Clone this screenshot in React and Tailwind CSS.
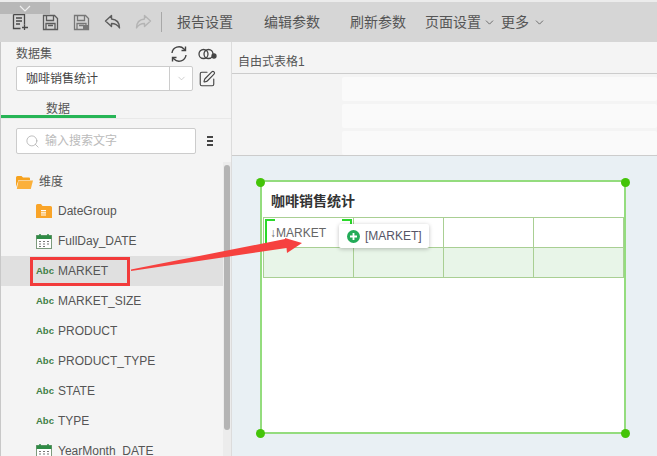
import React from "react";
import { ChevronDown, Search, SquarePen } from "lucide-react";

const FONT = "font-['Liberation_Sans','Noto_Sans_CJK_SC',sans-serif]";

const NewReportIcon = () => (
  <svg width="17" height="18" viewBox="0 0 17 18" fill="none" stroke="#4a4a4a" strokeWidth="1.300">
    <path d="M1.500 1.500h11v10M1.500 1.500v14h7" />
    <path d="M4 5h6M4 8h6M4 11h4" />
    <path d="M12.500 11.500v5.500M10 14.500h6" />
  </svg>
);

const SaveIcon = ({ dim }) => (
  <svg width="17" height="17" viewBox="0 0 17 17" fill="none" stroke={dim ? "#777" : "#5c5c5c"} strokeWidth="1.300">
    <path d="M1.500 1.500h11l3 3v11h-14z" />
    <path d="M4.500 1.500v5h7v-5M4 15.500v-6h9v6M6 11.500h5" />
    {dim && <path d="M10 11h6v5h-6z" fill="#777" stroke="none" />}
  </svg>
);

const UndoIcon = ({ color, flip }) => (
  <svg className={flip ? "-scale-x-100" : ""} width="17" height="16" viewBox="0 0 17 16" fill="none" stroke={color} strokeWidth="1.400" strokeLinejoin="round">
    <path d="M7.500 1.500L1.500 7l6 5.500V9.500c3.500 0 6 1 8 4.500 0-5-3-8.500-8-9z" />
  </svg>
);

const FolderOpenIcon = () => (
  <svg width="17" height="15" viewBox="0 0 17 15">
    <path d="M0 2.500Q0 1 1.500 1h4l1.500 1.500h6q1 0 1 1V5H2.500L0 12z" fill="#f6a21e" />
    <path d="M2.500 5.500H17l-2.200 8.500H.8z" fill="#fbb03b" />
  </svg>
);

const GroupIcon = () => (
  <svg width="16" height="14" viewBox="0 0 16 14">
    <path d="M0 1.500Q0 0 1.500 0h3.500l1.500 2H14.500q1.500 0 1.500 1.500V14H0z" fill="#f9a428" />
    <path d="M5 6h5v1.200H5zM5 8.200h5v1.200H5zM5 10.400h5v1.200H5z" fill="#fff" />
  </svg>
);

const CalendarIcon = () => (
  <svg width="16" height="15" viewBox="0 0 16 15">
    <rect x="0.500" y="1.500" width="15" height="13" fill="#fff" stroke="#7d9a7d" />
    <rect x="0.500" y="1.500" width="15" height="3.500" fill="#2e8b45" />
    <path d="M4 0v3M12 0v3" stroke="#2e8b45" strokeWidth="1.500" />
    <path d="M3 7.500h2M7 7.500h2M11 7.500h2M3 10h2M7 10h2M11 10h2M3 12.500h2M7 12.500h2" stroke="#777" />
  </svg>
);

const AbcIcon = () => (
  <span className="w-4 text-[9.5px] leading-none font-bold text-[#3f7f45] font-['Liberation_Sans',sans-serif]">Abc</span>
);

const fields = [
  ["group", "DateGroup"],
  ["date", "FullDay_DATE"],
  ["abc", "MARKET"],
  ["abc", "MARKET_SIZE"],
  ["abc", "PRODUCT"],
  ["abc", "PRODUCT_TYPE"],
  ["abc", "STATE"],
  ["abc", "TYPE"],
  ["date", "YearMonth_DATE"],
];

const Handle = ({ className }) => (
  <div className={`absolute w-[9px] h-[9px] rounded-full bg-[#44c408] ${className}`} />
);

const Toolbar = () => (
  <div className="h-10 flex items-center bg-[#d6d6d6] text-[14px] text-[#555] shrink-0">
    <div className="ml-3 flex items-center">
      <NewReportIcon />
      <div className="ml-[13px]"><SaveIcon /></div>
      <div className="ml-[14px]"><SaveIcon dim /></div>
      <div className="ml-[14px]"><UndoIcon color="#5c5c5c" /></div>
      <div className="ml-[14px]"><UndoIcon color="#b4b4b4" flip /></div>
    </div>
    <div className="ml-[9px] w-px h-5 bg-[#a8a8a8]" />
    <span className="ml-[15px]">报告设置</span>
    <span className="ml-[31px]">编辑参数</span>
    <span className="ml-[30px]">刷新参数</span>
    <span className="ml-[19px]">页面设置</span>
    <ChevronDown className="ml-[2px] w-[13px] h-[13px]" strokeWidth={1.500} />
    <span className="ml-[5px]">更多</span>
    <ChevronDown className="ml-1 w-[13px] h-[13px]" strokeWidth={1.500} />
  </div>
);

const Sidebar = () => (
  <div className="relative w-[232px] shrink-0 h-full border-l border-[#c8c8c8] border-r border-r-[#dcdcdc] bg-[#f4f4f4] text-[12px] text-[#555] overflow-hidden">
    <div className="flex items-center h-[24px] pl-[15px] pr-[14px]">
      <span>数据集</span>
      <svg className="ml-auto" width="18" height="18" viewBox="0 0 18 18" fill="none" stroke="#444" strokeWidth="1.400">
        <path d="M2 8a7 7 0 0 1 12-4l1.500 1.500M16 10a7 7 0 0 1-12 4l-1.500-1.500" />
        <path d="M15.500 1.500v4h-4M2.500 16.500v-4h4" />
      </svg>
      <svg className="ml-[10px]" width="19" height="12" viewBox="0 0 19 12" fill="none" stroke="#444" strokeWidth="1.300">
        <circle cx="5.500" cy="6" r="4.500" />
        <circle cx="10.500" cy="6" r="4.500" />
        <circle cx="16" cy="8" r="2" fill="#444" />
      </svg>
    </div>
    <div className="flex items-center pl-[15px]">
      <div className="w-[177px] h-[25px] flex items-center bg-white border border-[#ccc] rounded-[2px] text-[#444]">
        <span className="ml-[9px]">咖啡销售统计</span>
        <div className="ml-auto w-[23px] h-full border-l border-[#ccc] flex items-center justify-center">
          <ChevronDown className="w-[11px] h-[11px] text-[#bbb]" strokeWidth={1.500} />
        </div>
      </div>
      <SquarePen className="ml-[5px] w-[18px] h-[18px] text-[#444]" strokeWidth={1.500} />
    </div>
    <div className="h-[28px] border-b border-[#e8e8e8] relative">
      <span className="absolute left-[45px] top-[9px]">数据</span>
      <div className="absolute left-0 bottom-0 w-[115px] h-[3px] bg-[#27b556]" />
    </div>
    <div className="flex items-center pl-[15px] mt-[9px]">
      <div className="w-[180px] h-[26px] flex items-center bg-white border border-[#ccc] rounded-[2px] text-[#bbb]">
        <Search className="ml-[8px] w-[15px] h-[15px] text-[#aaa]" strokeWidth={1.200} />
        <span className="ml-[5px]">输入搜索文字</span>
      </div>
      <div className="ml-[11px] flex flex-col gap-[2px]">
        <div className="w-[6px] h-[2px] bg-[#444]" />
        <div className="w-[6px] h-[2px] bg-[#444]" />
        <div className="w-[6px] h-[2px] bg-[#444]" />
      </div>
    </div>
    <div className="flex items-center h-[30px] mt-3 pl-[15px] pt-[2px]">
      <FolderOpenIcon />
      <span className="ml-[6px]">维度</span>
    </div>
    {fields.map(([kind, name]) => (
      <div
        key={name}
        className={`flex items-center h-[30px] w-[222px] pl-[35px] ${name === "MARKET" ? "bg-[#e0e0e0]" : ""}`}
      >
        <div className="w-4 flex justify-center whitespace-nowrap">
          {kind === "group" && <GroupIcon />}
          {kind === "date" && <CalendarIcon />}
          {kind === "abc" && <AbcIcon />}
        </div>
        <span className="ml-[6px] text-[12px] text-[#555]">{name}</span>
      </div>
    ))}
    <div className="absolute right-0 top-[120px] bottom-0 w-[8px] bg-[#ececec]">
      <div className="ml-px mt-[3px] w-[6px] h-[265px] rounded-full bg-[#b4b4b4]" />
    </div>
  </div>
);

const Report = () => (
  <div className="relative w-[366px] h-[254px] bg-white border-2 border-[#94dc7e]">
    <Handle className="-left-[6px] -top-[4px]" />
    <Handle className="-right-[6px] -top-[4px]" />
    <Handle className="-left-[6px] -bottom-[6px]" />
    <Handle className="-right-[6px] -bottom-[6px]" />
    <div className="h-[35px] pl-[9px] pt-[11px] text-[14px] leading-[16px] font-bold text-[#333]">咖啡销售统计</div>
    <div className="ml-px w-[361px] grid grid-cols-[90px_90px_90px_90px] border-t border-l border-[#a9cf93]">
      <div className="relative h-[30px] border-r border-b border-[#a9cf93] pl-[6px] pt-[7px] text-[12px] leading-[16px] text-[#666]">
        <span>↓MARKET</span>
        <div className="absolute left-px top-px w-[10px] h-[26px] border-l-2 border-t-2 border-[#2ad92a]" />
        <div className="absolute right-px top-px w-[10px] h-[8px] border-r-2 border-t-2 border-[#2ad92a]" />
      </div>
      <div className="h-[30px] border-r border-b border-[#a9cf93]" />
      <div className="h-[30px] border-r border-b border-[#a9cf93]" />
      <div className="h-[30px] border-r border-b border-[#a9cf93]" />
      <div className="h-[30px] border-r border-b border-[#a9cf93] bg-[#e8f5e8]" />
      <div className="h-[30px] border-r border-b border-[#a9cf93] bg-[#e8f5e8]" />
      <div className="h-[30px] border-r border-b border-[#a9cf93] bg-[#e8f5e8]" />
      <div className="h-[30px] border-r border-b border-[#a9cf93] bg-[#e8f5e8]" />
    </div>
  </div>
);

const MainArea = () => (
  <div className="flex-1 min-w-0 flex flex-col text-[12px] text-[#555]">
    <div className="h-[32px] shrink-0 bg-[#f4f4f4] border-b border-[#ccc] pl-[6px] pt-[13px] leading-[14px]">自由式表格1</div>
    <div className="h-[82px] shrink-0 bg-[#f4f4f4] border-b border-[#ccc] pl-[110px] pt-[3px] flex flex-col gap-[3px] overflow-hidden">
      <div className="h-6 shrink-0 bg-[#fafafa] rounded-[2px]" />
      <div className="h-6 shrink-0 bg-[#fafafa] rounded-[2px]" />
      <div className="h-6 shrink-0 bg-[#fafafa] rounded-[2px]" />
    </div>
    <div className="flex-1 bg-[#e9f0f4] pl-[28px] pt-[24px]">
      <Report />
    </div>
  </div>
);

export default function App() {
  return (
    <div className={`relative w-[657px] h-[456px] overflow-hidden bg-white flex flex-col ${FONT}`}>
      <div className="h-[2px] bg-[#ececec] shrink-0" />
      <Toolbar />
      <div className="flex flex-1 min-h-0">
        <Sidebar />
        <MainArea />
      </div>

      {/* collapse tab */}
      <div className="absolute left-0 top-[2px] w-[50px] h-3 bg-[#b8b8b8] flex items-center justify-center">
        <svg width="12" height="7" viewBox="0 0 12 7" fill="none" stroke="#eee" strokeWidth="1.200"><path d="M1 1l5 5 5-5" /></svg>
      </div>

      {/* drag tooltip */}
      <div className="absolute left-[339px] top-[224px] w-[90px] h-6 bg-white rounded-[2px] shadow-[0_1px_4px_rgba(0,0,0,0.25)] flex items-center pl-2 text-[12px] text-[#556]">
        <svg width="13" height="13" viewBox="0 0 13 13">
          <circle cx="6.500" cy="6.500" r="6.500" fill="#22ab58" />
          <path d="M6.500 3v7M3 6.500h7" stroke="#fff" strokeWidth="1.800" />
        </svg>
        <span className="ml-[5px]">[MARKET]</span>
      </div>

      {/* annotation */}
      <div className="absolute left-[30px] top-[257px] w-[100px] h-[29px] border-[3px] border-[#f23b3b]" />
      <svg className="absolute left-0 top-0 pointer-events-none" width="657" height="456">
        <polygon points="131,269.500 285,239 285,238 302,243 287,253 286.500,248 131,271" fill="#f6413f" />
      </svg>
    </div>
  );
}
